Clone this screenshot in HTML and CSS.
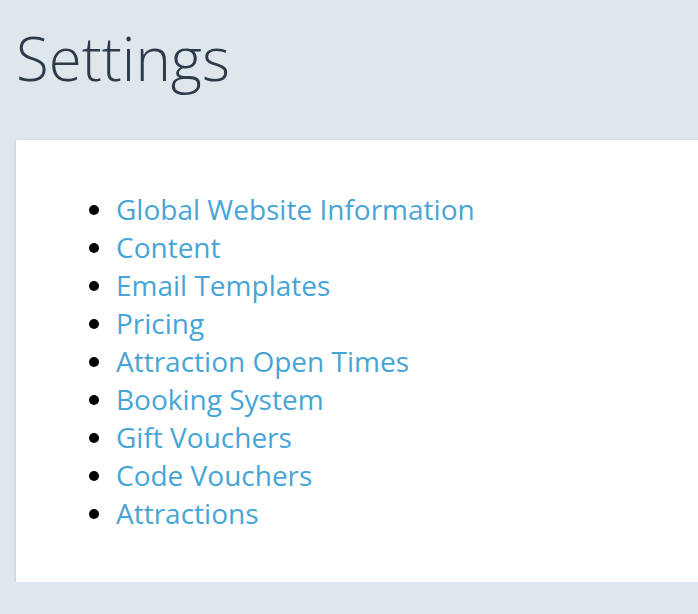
FILE: index.html
```html
<!DOCTYPE html>
<html lang="en">
<head>
  <meta charset="UTF-8" />
  <meta name="viewport" content="width=device-width, initial-scale=1.0"/>
  <title>Settings</title>
  <link rel="stylesheet" href="styles.css">
</head>
<body>
  <div class="page">
    <h1>Settings</h1>

    <div class="panel">
      <ul class="settings-list">
        <li><a href="#">Global Website Information</a></li>
        <li><a href="#">Content</a></li>
        <li><a href="#">Email Templates</a></li>
        <li><a href="#">Pricing</a></li>
        <li><a href="#">Attraction Open Times</a></li>
        <li><a href="#">Booking System</a></li>
        <li><a href="#">Gift Vouchers</a></li>
        <li><a href="#">Code Vouchers</a></li>
        <li><a href="#">Attractions</a></li>
      </ul>
    </div>
  </div>
</body>
</html>
```

FILE: styles.css
```css
body {
  font-family: 'Open Sans', sans-serif;
  margin: 0;
  padding: 0;
  background: #dfe7ed;
  color: #2c3a4a;
  overflow: hidden;
}
.page {
  padding: 0 0 0 16px;
}
h1 {
  margin: 0;
  padding: 17px 0 0 0;
  height: 140px;
  box-sizing: border-box;
  font-size: 60px;
  font-weight: 300;
  line-height: 82px;
  color: #2c3a4a;
}
.panel {
  background: #fff;
  margin-right: -20px;
  padding: 50px 0 50px 60px;
  box-shadow: 0 1px 3px rgba(40, 60, 80, 0.25);
}
.settings-list {
  margin: 0;
  padding-left: 40px;
  font-size: 28px;
  line-height: 38px;
  color: #000;
}
.settings-list a {
  color: #47a5d5;
  text-decoration: none;
}
```
